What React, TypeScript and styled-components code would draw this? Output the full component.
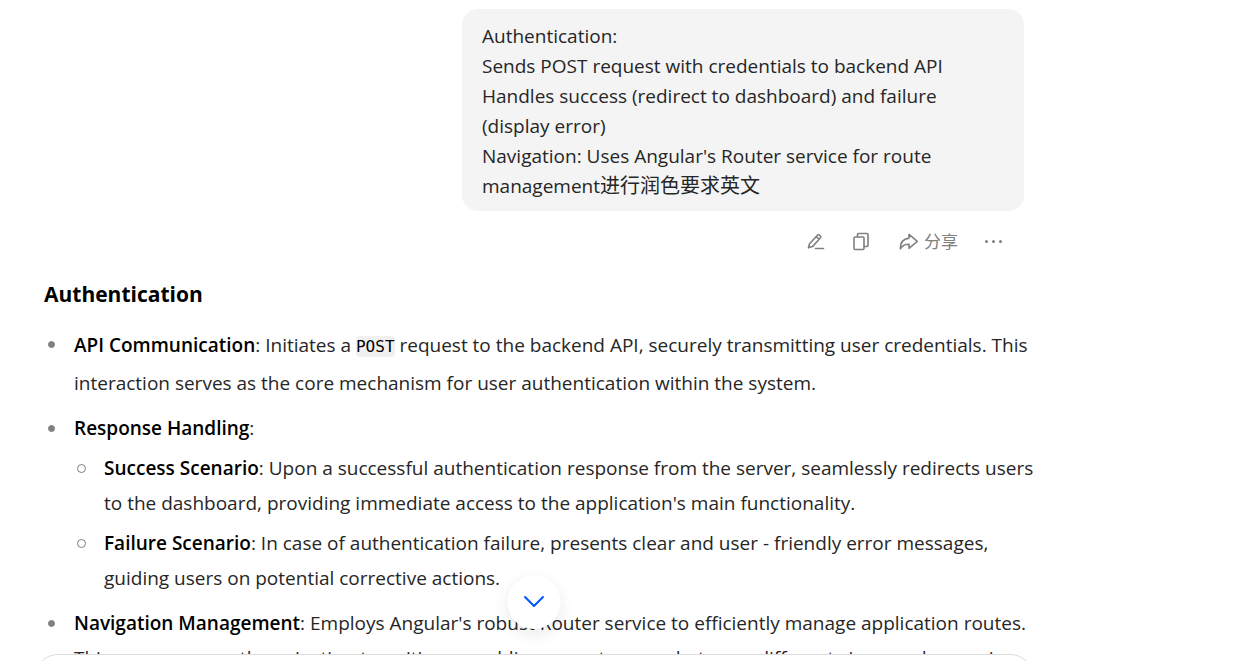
import React from "react";
import styled, { createGlobalStyle } from "styled-components";

const GlobalStyle = createGlobalStyle`
  *, *::before { box-sizing: border-box; }
  html, body, #root { height: 100%; }
  body {
    margin: 0;
    overflow: hidden;
    background: #fff;
    color: #262626;
    font-family: "Open Sans", "Noto Sans CJK SC", sans-serif;
    font-size: 19px;
  }
`;

const Page = styled.main`
  position: relative;
  height: 100%;
  max-width: 1068px;
  padding: 9px 44px 0;
  overflow: hidden;
`;

const Bubble = styled.div`
  width: fit-content;
  max-width: 562px;
  margin-left: auto;
  padding: 12px 20px 10px;
  border-radius: 16px;
  background: #f4f4f4;
  line-height: 30px;
  white-space: pre-wrap;
`;

const Chinese = styled.span`
  font-size: 20px;
  line-height: 1;
`;

const Actions = styled.div`
  display: flex;
  justify-content: flex-end;
  align-items: center;
  gap: 26px;
  height: 22px;
  margin-top: 20px;
  padding-right: 20px;
`;

const ActionButton = styled.button`
  display: flex;
  align-items: center;
  gap: 5px;
  padding: 0;
  border: 0;
  background: none;
  color: #808080;
  font: inherit;
  font-size: 17px;
  line-height: 22px;
  cursor: pointer;
`;

const Heading = styled.h3`
  margin: 26px 0 0;
  color: #000;
  font-size: 21px;
  font-weight: 700;
  line-height: 30px;
`;

const List = styled.ul`
  display: grid;
  gap: 10px;
  margin: 18px -12px 0 0;
  padding: 0;
  list-style: none;
  line-height: 35px;
`;

const SubList = styled.ul`
  display: grid;
  gap: 5px;
  margin: 5px 0 0;
  padding: 0;
  list-style: none;
`;

const Item = styled.li<{ $nested?: boolean }>`
  display: grid;
  grid-template-columns: 30px 1fr;

  &::before {
    content: "";
    width: ${(p) => (p.$nested ? 9 : 7)}px;
    height: ${(p) => (p.$nested ? 9 : 7)}px;
    margin: ${(p) => (p.$nested ? "13px 0 0 3px" : "14px 0 0 4px")};
    border: 1px solid #808080;
    border-radius: 50%;
    background: ${(p) => (p.$nested ? "transparent" : "#808080")};
  }
`;

const Term = styled.strong`
  color: #000;
  font-weight: 600;
`;

const Code = styled.code`
  padding: 1px 0;
  border-radius: 4px;
  background: #f0f0f0;
  color: #000;
  font-family: "DejaVu Sans Mono", monospace;
  font-size: 16px;
  line-height: 39px;
`;

const ScrollButton = styled.button`
  position: absolute;
  left: 50%;
  bottom: 32px;
  display: grid;
  place-items: center;
  width: 54px;
  height: 54px;
  margin-left: -27px;
  padding: 0;
  border: 0;
  border-radius: 50%;
  background: #fff;
  color: #0057ff;
  box-shadow: 0 6px 16px rgba(0, 0, 0, 0.08), 0 0 2px rgba(0, 0, 0, 0.06);
  cursor: pointer;
`;

const Composer = styled.div`
  position: absolute;
  left: 34px;
  right: 34px;
  bottom: 0;
  height: 7px;
  overflow: hidden;
  background: #fff;

  &::before {
    content: "";
    display: block;
    height: 100px;
    border: 1px solid #dcdcdc;
    border-radius: 24px;
    background: #fff;
  }
`;

const message = `Authentication:
Sends POST request with credentials to backend API
Handles success (redirect to dashboard) and failure (display error)
Navigation: Uses Angular's Router service for route management`;

const iconProps = {
  fill: "none",
  stroke: "currentColor",
  strokeWidth: 1.6,
  strokeLinecap: "round" as const,
  strokeLinejoin: "round" as const,
  "aria-hidden": true,
};

const EditIcon = () => (
  <svg width="20" height="20" viewBox="0 0 20 20" {...iconProps}>
    <path d="M1.500 15.800l.9-3.800L10.600 3q.8-.8 1.600 0l1.300 1.100q.8.8 0 1.600L5.500 14.600zM9.300 4.700l2.700 2.500M8.500 16.500H16.500" />
  </svg>
);

const CopyIcon = () => (
  <svg width="20" height="20" viewBox="0 0 20 20" {...iconProps}>
    <rect x="1" y="5" width="10" height="12.500" rx="1" />
    <path d="M4.500 5V2.500q0-1 1-1h8.500q1 0 1 1v11q0 1-1 1h-3" />
  </svg>
);

const ShareIcon = () => (
  <svg width="20" height="20" viewBox="0 0 20 20" {...iconProps}>
    <path d="M10 2.300l8.300 7-8.300 7v-4q-5.500-.4-8.700 4.600Q1 7.300 10 6.100z" />
  </svg>
);

const MoreIcon = () => (
  <svg width="20" height="20" viewBox="0 0 20 20" fill="currentColor" aria-hidden>
    <circle cx="2.500" cy="9.500" r="1.500" />
    <circle cx="9.500" cy="9.500" r="1.500" />
    <circle cx="16.500" cy="9.500" r="1.500" />
  </svg>
);

export default function App() {
  return (
    <>
      <GlobalStyle />
      <Page>
        <Bubble>{message}<Chinese lang="zh-CN">进行润色要求英文</Chinese></Bubble>
        <Actions>
          <ActionButton aria-label="Edit"><EditIcon /></ActionButton>
          <ActionButton aria-label="Copy"><CopyIcon /></ActionButton>
          <ActionButton><ShareIcon />分享</ActionButton>
          <ActionButton aria-label="More"><MoreIcon /></ActionButton>
        </Actions>
        <Heading>Authentication</Heading>
        <List>
          <Item>
            <div>
              <Term>API Communication</Term>: Initiates a <Code>POST</Code> request to the backend API, securely
              transmitting user credentials. This interaction serves as the core mechanism for user authentication
              within the system.
            </div>
          </Item>
          <Item>
            <div>
              <Term>Response Handling</Term>:
              <SubList>
                <Item $nested>
                  <div>
                    <Term>Success Scenario</Term>: Upon a successful authentication response from the server,
                    seamlessly redirects users to the dashboard, providing immediate access to the application's main
                    functionality.
                  </div>
                </Item>
                <Item $nested>
                  <div>
                    <Term>Failure Scenario</Term>: In case of authentication failure, presents clear and user -
                    friendly error messages, guiding users on potential corrective actions.
                  </div>
                </Item>
              </SubList>
            </div>
          </Item>
          <Item>
            <div>
              <Term>Navigation Management</Term>: Employs Angular's robust Router service to efficiently manage
              application routes. This ensures smooth navigation transitions, enabling users to move between different
              views and pages in
            </div>
          </Item>
        </List>
        <ScrollButton aria-label="Scroll to bottom">
          <svg width="24" height="24" viewBox="0 0 24 24" {...iconProps} strokeWidth={2}>
            <path d="M3 7l9 9 9-9" />
          </svg>
        </ScrollButton>
        <Composer />
      </Page>
    </>
  );
}
